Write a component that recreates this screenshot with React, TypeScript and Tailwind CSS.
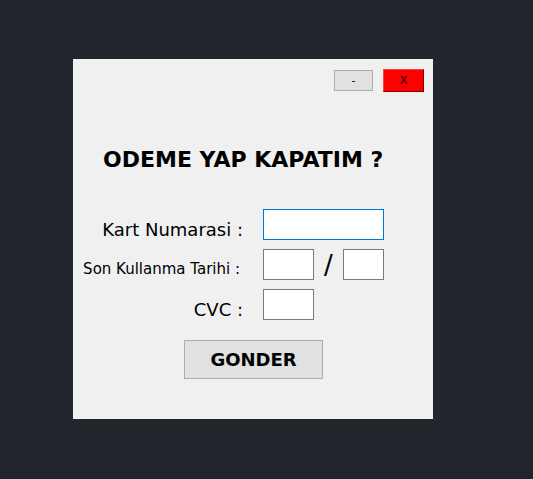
import React from 'react';

const label = "text-right text-black whitespace-nowrap leading-none translate-y-[5px]";

const App: React.FC = () => {
  return (
    <div className="min-h-[479px] w-full bg-[#22252b] pt-[59px] pl-[73px] font-['DejaVu_Sans',sans-serif]">
      <div className="w-[360px] h-[360px] bg-[#f0f0f0] flex flex-col">
        {/* window buttons */}
        <div className="flex justify-end items-start gap-[10px] pt-[10px] pr-[9px]">
          <button className="mt-[1px] w-[39px] h-[21px] bg-[#e1e1e1] border border-[#adadad] text-[11px] leading-none text-black">
            -
          </button>
          <button className="w-[41px] h-[23px] bg-[#ff0000] border border-[#ff4040] border-b-[#8a0000] border-r-[#8a0000] text-[11px] leading-none text-black">
            X
          </button>
        </div>

        <h1 className="mt-[57px] pl-[30px] text-[22px] leading-none font-bold text-black">
          ODEME YAP KAPATIM ?
        </h1>

        {/* form */}
        <div className="mt-[38px] grid grid-cols-[170px_1fr] gap-x-[20px] gap-y-[9px] items-center">
          <span className={`${label} text-[18px]`}>Kart Numarasi :</span>
          <input className="w-[121px] h-[31px] bg-white border border-[#0078d7] outline-none" />

          <span className={`${label} text-[15px] mr-[3px]`}>Son Kullanma Tarihi :</span>
          <div className="flex items-center">
            <input className="w-[51px] h-[31px] bg-white border border-[#7a7a7a] outline-none" />
            <span className="w-[29px] text-center text-[26px] leading-none">/</span>
            <input className="w-[41px] h-[31px] bg-white border border-[#7a7a7a] outline-none" />
          </div>

          <span className={`${label} text-[18px]`}>CVC :</span>
          <input className="w-[51px] h-[31px] bg-white border border-[#7a7a7a] outline-none" />
        </div>

        <div className="mt-[20px] pl-[111px]">
          <button className="w-[139px] h-[39px] bg-[#e1e1e1] border border-[#adadad] text-[18px] font-bold text-black">
            GONDER
          </button>
        </div>
      </div>
    </div>
  );
};

export default App;
